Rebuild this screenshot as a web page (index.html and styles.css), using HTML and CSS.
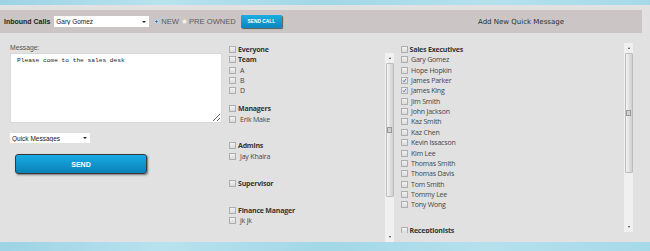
FILE: index.html
```html
<!DOCTYPE html>
<html lang="en">

<head>
  <meta charset="UTF-8">
  <meta name="viewport" content="width=device-width, initial-scale=1.0">
  <title>Inbound Calls</title>
  <link rel="stylesheet" href="styles.css">
</head>

<body>
  <div class="band"></div>

  <div class="bar">
    <div class="bar-left">
      <span class="bar-label">Inbound Calls</span>
      <div class="select select-agent">
        <select>
          <option>Gary Gomez</option>
        </select>
        <span class="caret"></span>
      </div>
      <label class="radio radio-new"><span class="dot on"></span>NEW</label>
      <label class="radio radio-used"><span class="dot"></span>PRE OWNED</label>
      <button type="button" class="btn-call">SEND CALL</button>
    </div>
    <div class="bar-right">Add New Quick Message</div>
  </div>

  <div class="main">
    <div class="compose">
      <label for="message" class="field-label">Message:</label>
      <textarea id="message">Please come to the sales desk</textarea>
      <div class="select select-quick">
        <select>
          <option>Quick Messages</option>
        </select>
        <span class="caret"></span>
      </div>
      <button type="button" class="btn-send">SEND</button>
    </div>

    <ul class="groups">
      <li class="head"><span class="box"></span>Everyone</li>
      <li class="head"><span class="box"></span>Team</li>
      <li><span class="box"></span>A</li>
      <li><span class="box"></span>B</li>
      <li><span class="box"></span>D</li>
      <li class="head group-first"><span class="box"></span>Managers</li>
      <li><span class="box"></span>Erik Make</li>
      <li class="head group"><span class="box"></span>Admins</li>
      <li><span class="box"></span>Jay Khaira</li>
      <li class="head group"><span class="box"></span>Supervisor</li>
      <li class="head group"><span class="box"></span>Finance Manager</li>
      <li><span class="box"></span>jk jk</li>
    </ul>

    <div class="scrollbar sb-groups">
      <span class="sb-arrow up"></span>
      <div class="sb-thumb"><span class="sb-grip"></span></div>
      <div class="sb-track"></div>
      <span class="sb-arrow down"></span>
    </div>

    <ul class="people">
      <li class="head"><span class="box"></span>Sales Executives</li>
      <li><span class="box"></span>Gary Gomez</li>
      <li><span class="box"></span>Hope Hopkin</li>
      <li><span class="box checked"><svg viewBox="0 0 7 7"><path d="M1.3 3.6 L2.8 5.2 L5.8 1.2" /></svg></span>James Parker</li>
      <li><span class="box checked"><svg viewBox="0 0 7 7"><path d="M1.3 3.6 L2.8 5.2 L5.8 1.2" /></svg></span>James King</li>
      <li><span class="box"></span>Jim Smith</li>
      <li><span class="box"></span>John Jackson</li>
      <li><span class="box"></span>Kaz Smith</li>
      <li><span class="box"></span>Kaz Chen</li>
      <li><span class="box"></span>Kevin Issacson</li>
      <li><span class="box"></span>Kim Lee</li>
      <li><span class="box"></span>Thomas Smith</li>
      <li><span class="box"></span>Thomas Davis</li>
      <li><span class="box"></span>Tom Smith</li>
      <li><span class="box"></span>Tommy Lee</li>
      <li><span class="box"></span>Tony Wong</li>
      <li class="head group"><span class="box"></span>Receptionists</li>
    </ul>

    <div class="scrollbar sb-people">
      <span class="sb-arrow up"></span>
      <div class="sb-thumb"><span class="sb-grip"></span></div>
      <div class="sb-track"></div>
      <span class="sb-arrow down"></span>
    </div>
  </div>

  <div class="band band-bottom"></div>
</body>

</html>
```

FILE: styles.css
```css
body {
  margin: 0;
  width: 650px;
  height: 251px;
  overflow: hidden;
  background-color: #e1e1e1;
  font-family: "Liberation Sans", Arial, sans-serif;
  color: #555;
}

.band {
  height: 5px;
  background: linear-gradient(90deg, #9dd3e4, #b8e2ee 25%, #a2d7e6 50%, #b5e1ed 75%, #a6d9e8);
}

.band-bottom {
  height: 9px;
}

/* top bar */

.bar {
  display: flex;
  align-items: center;
  width: 642px;
  height: 23px;
  margin-top: 5px;
  background-color: #cbc6c5;
}

.bar-left {
  display: flex;
  align-items: center;
  width: 400px;
  padding-left: 4px;
  box-sizing: border-box;
}

.bar-label {
  font-size: 7px;
  font-weight: bold;
  color: #1e1e1e;
}

.bar-right {
  flex: 1;
  text-align: center;
  font-family: "DejaVu Sans", sans-serif;
  font-size: 7px;
  color: #2e2e2e;
}

.select {
  display: flex;
  align-items: center;
  background-color: #fff;
}

.select select {
  flex: 1;
  min-width: 0;
  height: 100%;
  padding: 0 0 0 2px;
  border: none;
  outline: none;
  background: transparent;
  appearance: none;
  font-family: "Liberation Sans", Arial, sans-serif;
  color: #222;
}

.caret {
  width: 0;
  height: 0;
  margin-right: 3px;
  border-left: 2px solid transparent;
  border-right: 2px solid transparent;
  border-top: 2.5px solid #222;
}

.select-agent {
  width: 95px;
  height: 11px;
  margin-left: 4px;
}

.select-agent select {
  font-size: 6.5px;
}

.radio {
  display: flex;
  align-items: center;
  font-size: 7.6px;
  color: #5a5a5a;
}

.radio-new {
  margin-left: 5px;
}

.radio-used {
  margin-left: 3px;
}

.dot {
  width: 5px;
  height: 5px;
  margin-right: 2px;
  border-radius: 50%;
  box-sizing: border-box;
  border: 1px solid #d8d8d8;
  background-color: #f4f4f4;
}

.dot.on {
  border-color: #b9d4e6;
  background: radial-gradient(circle, #2b6fb3 45%, #e8f0f8 55%);
}

.btn-call {
  width: 41px;
  height: 13px;
  margin-left: 5px;
  padding: 0;
  border: none;
  border-radius: 1px;
  background: linear-gradient(#1aaee3, #0a86bd);
  box-shadow: 1px 1px 1px rgba(0, 0, 0, 0.55);
  color: #fff;
  font-family: "Liberation Sans", Arial, sans-serif;
  font-size: 4.8px;
  font-weight: bold;
}

/* main area */

.main {
  display: flex;
  align-items: flex-start;
  height: 209px;
}

.compose {
  display: flex;
  flex-direction: column;
  align-items: flex-start;
  width: 212px;
  margin-left: 10px;
  padding-top: 11px;
}

.field-label {
  height: 9px;
  font-size: 6.8px;
  color: #555;
}

textarea {
  width: 212px;
  height: 70px;
  margin: 0;
  padding: 3px 6px;
  box-sizing: border-box;
  border: 1px solid #d9d9d9;
  background-color: #fff;
  font-family: "Liberation Mono", "Courier New", monospace;
  font-size: 6.2px;
  color: #222;
  resize: both;
}

.select-quick {
  width: 80px;
  height: 10px;
  margin-top: 10px;
}

.select-quick select {
  font-size: 6.5px;
}

.btn-send {
  width: 132px;
  height: 20px;
  margin: 11px 0 0 5px;
  padding: 0;
  border: 1px solid #3a3a3a;
  border-radius: 3px;
  background: linear-gradient(#18abe3, #0981b6);
  box-shadow: 1px 1px 2px rgba(0, 0, 0, 0.5);
  color: #fff;
  font-family: "Liberation Sans", Arial, sans-serif;
  font-size: 7px;
  font-weight: bold;
  cursor: pointer;
}

/* check lists */

.groups,
.people {
  margin: 11.3px 0 0 7px;
  padding: 0;
  list-style: none;
  font-family: "Open Sans", sans-serif;
  font-size: 7px;
  letter-spacing: -0.2px;
  color: #454545;
}

.groups {
  width: 156px;
}

.people {
  width: 223px;
  height: 188.5px;
  overflow: hidden;
}

.groups li,
.people li {
  display: flex;
  align-items: center;
  height: 10.37px;
  white-space: nowrap;
}

.groups .head,
.people .head {
  font-weight: bold;
  color: #353535;
}

.groups .group-first {
  margin-top: 7.4px;
}

.groups .group {
  margin-top: 16.6px;
}

.people .group {
  margin-top: 15.3px;
}

.box {
  display: flex;
  align-items: center;
  justify-content: center;
  width: 7px;
  height: 7px;
  margin-right: 4px;
  box-sizing: border-box;
  border: 1px solid #aeaeae;
  background: linear-gradient(#f2f2f2, #dadada);
  flex-shrink: 0;
}

.head .box {
  margin-right: 2px;
}

.box svg {
  width: 7px;
  height: 7px;
  fill: none;
  stroke: #2a57b8;
  stroke-width: 1.1;
}

.people .box {
  margin-right: 3px;
}

.people .head .box {
  margin-right: 1.5px;
}

/* scrollbars */

.scrollbar {
  display: flex;
  flex-direction: column;
  align-items: center;
  width: 9px;
  height: 189px;
  background-color: #f0f0f0;
  flex-shrink: 0;
}

.sb-groups {
  margin-top: 20px;
}

.sb-people {
  margin-top: 10px;
}

.sb-arrow {
  display: flex;
  align-items: center;
  justify-content: center;
  width: 9px;
  height: 10px;
}

.sb-arrow::after {
  content: "";
  border-left: 1.5px solid transparent;
  border-right: 1.5px solid transparent;
}

.sb-arrow.up::after {
  border-bottom: 2px solid #444;
}

.sb-arrow.down::after {
  border-top: 2px solid #444;
}

.sb-thumb {
  display: flex;
  align-items: center;
  justify-content: center;
  width: 8px;
  box-sizing: border-box;
  border: 1px solid #bdbdbd;
  border-radius: 1px;
  background: linear-gradient(90deg, #f4f4f4, #dedede 60%, #cfcfcf);
}

.sb-groups .sb-thumb {
  height: 134px;
}

.sb-people .sb-thumb {
  height: 120px;
}

.sb-grip {
  width: 3px;
  height: 4px;
  border: 1px solid #999;
  background-color: #d0d0d0;
}

.sb-track {
  flex: 1;
}
```
